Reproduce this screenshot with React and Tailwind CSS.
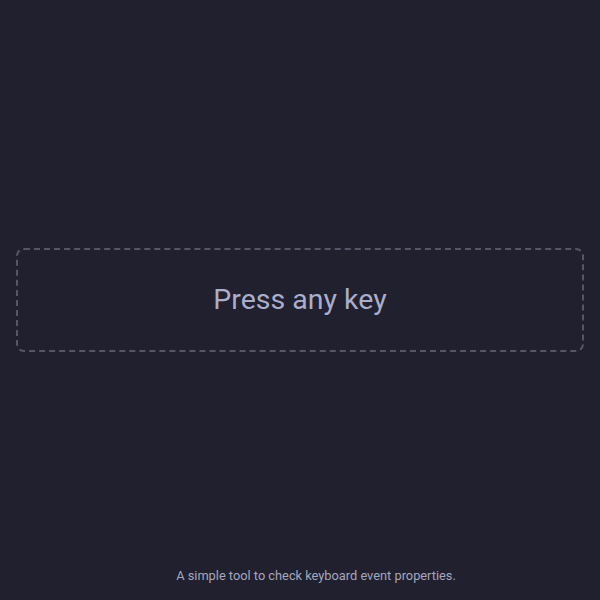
import React from 'react';

const App = () => {
  return (
    <div className="h-screen bg-[#20202f] flex flex-col" style={{ fontFamily: 'Roboto, "Noto Sans", sans-serif' }}>
      {/* Key capture area */}
      <div className="flex-1 flex items-center px-4 pt-12">
        <div className="w-full h-[104px] border-2 border-dashed border-[#555667] rounded-lg flex items-center justify-center">
          <span className="text-[28.5px] text-[#abaecb]">Press any key</span>
        </div>
      </div>

      <footer className="h-12 flex items-center justify-center pl-8">
        <p className="text-[12.8px] text-[#a6a7bc]">A simple tool to check keyboard event properties.</p>
      </footer>
    </div>
  );
};

export default App;
